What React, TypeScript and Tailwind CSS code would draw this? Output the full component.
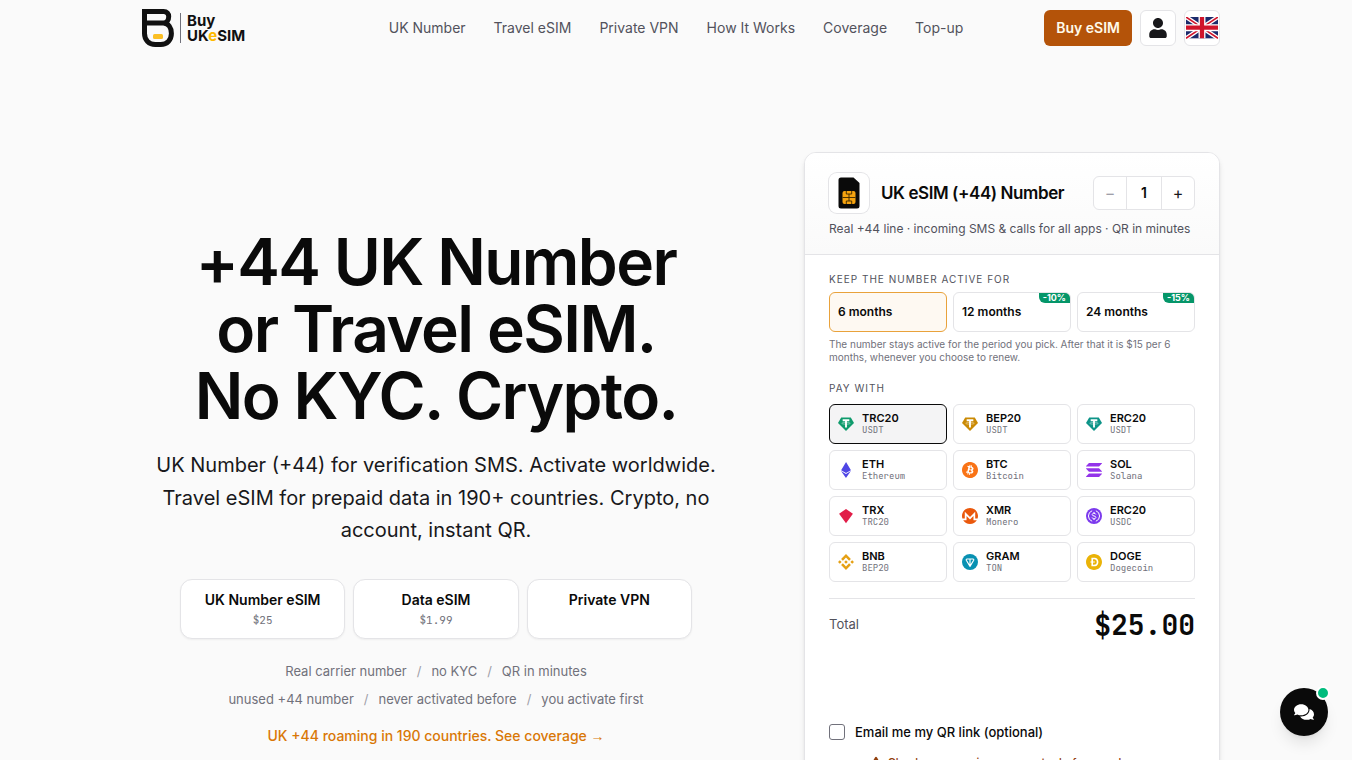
import React, { useState } from "react";
import { FaComments, FaExclamationTriangle, FaUser } from "react-icons/fa";
import {
  SiBinance,
  SiBitcoin,
  SiDogecoin,
  SiEthereum,
  SiMonero,
  SiSolana,
} from "react-icons/si";

interface Coin {
  id: string;
  name: string;
  network: string;
  color: string;
  icon: React.ComponentType<{ className?: string }>;
}

interface Period {
  months: number;
  discount?: string;
}

const TetherIcon = ({ className }: { className?: string }) => (
  <svg viewBox="0 0 24 24" fill="none" className={className} aria-hidden="true">
    <path d="M4.8 2.2h14.4L24 10.6 12 22.4 0 10.6z" fill="currentColor" />
    <path d="M7 6.4h10M12 6.4v11" stroke="#fff" strokeWidth="2.8" />
    <ellipse cx="12" cy="11" rx="6.4" ry="1.3" stroke="#fff" strokeWidth=".6" />
  </svg>
);

const TronIcon = ({ className }: { className?: string }) => (
  <svg viewBox="0 0 24 24" className={className} aria-hidden="true">
    <path d="M12 1.6 22.4 8.6 12 22.8 1.6 8.6z" fill="currentColor" />
  </svg>
);

const TonIcon = ({ className }: { className?: string }) => (
  <svg viewBox="0 0 24 24" fill="none" className={className} aria-hidden="true">
    <circle cx="12" cy="12" r="12" fill="currentColor" />
    <path d="M7.5 7.5h9c1 0 1.5 1 1 1.9L12 18.5 6.5 9.4c-.5-.9 0-1.9 1-1.9zM12 7.5v11" stroke="#fff" strokeWidth="1.7" strokeLinejoin="round" />
  </svg>
);

const UsdcIcon = ({ className }: { className?: string }) => (
  <svg viewBox="0 0 24 24" fill="none" className={className} aria-hidden="true">
    <circle cx="12" cy="12" r="12" fill="currentColor" />
    <g stroke="#fff" strokeWidth="1.5">
      <path d="M9.2 4.1a8.4 8.4 0 0 0 0 15.8M14.8 4.1a8.4 8.4 0 0 1 0 15.8" />
      <path d="M14.7 9.7c-.3-1.2-1.3-1.8-2.7-1.8-1.6 0-2.7.8-2.7 2 0 2.9 5.5 1.2 5.5 4.2 0 1.2-1.1 2-2.8 2-1.6 0-2.7-.7-2.9-2M12 6v2M12 16v2" />
    </g>
  </svg>
);

const coins: Coin[] = [
  { id: "usdt-trc20", name: "TRC20", network: "USDT", color: "text-[#0f9b6c]", icon: TetherIcon },
  { id: "usdt-bep20", name: "BEP20", network: "USDT", color: "text-[#ca8a04]", icon: TetherIcon },
  { id: "usdt-erc20", name: "ERC20", network: "USDT", color: "text-[#0d9488]", icon: TetherIcon },
  { id: "eth", name: "ETH", network: "Ethereum", color: "text-[#4f46e5]", icon: SiEthereum },
  { id: "btc", name: "BTC", network: "Bitcoin", color: "text-[#f97316]", icon: SiBitcoin },
  { id: "sol", name: "SOL", network: "Solana", color: "text-[#9333ea]", icon: SiSolana },
  { id: "trx", name: "TRX", network: "TRC20", color: "text-[#e11d48]", icon: TronIcon },
  { id: "xmr", name: "XMR", network: "Monero", color: "text-[#ea580c]", icon: SiMonero },
  { id: "usdc", name: "ERC20", network: "USDC", color: "text-[#7c3aed]", icon: UsdcIcon },
  { id: "bnb", name: "BNB", network: "BEP20", color: "text-[#e5a013]", icon: SiBinance },
  { id: "gram", name: "GRAM", network: "TON", color: "text-[#0891b2]", icon: TonIcon },
  { id: "doge", name: "DOGE", network: "Dogecoin", color: "text-[#eab308]", icon: SiDogecoin },
];

const periods: Period[] = [
  { months: 6 },
  { months: 12, discount: "-10%" },
  { months: 24, discount: "-15%" },
];

const navLinks = ["UK Number", "Travel eSIM", "Private VPN", "How It Works", "Coverage", "Top-up"];

const products = [
  { title: "UK Number eSIM", price: "$25" },
  { title: "Data eSIM", price: "$1.99" },
  { title: "Private VPN", price: "" },
];

const facts = [
  ["Real carrier number", "no KYC", "QR in minutes"],
  ["unused +44 number", "never activated before", "you activate first"],
];

const mono = "font-['JetBrains_Mono','Liberation_Mono',monospace]";

const Logo = () => (
  <a href="#" className="flex items-center gap-1.5 justify-self-start pl-2.5">
    <svg width="32" height="38" viewBox="0 0 32 38" fill="none" aria-hidden="true">
      <path
        d="M2.5 18V2.5H21.5C25 2.5 26.7 4.7 26.7 7.5C26.7 10.5 25 14 21.5 14H2.5V24.5C2.5 31 7 35.4 13.2 35.4H18.8C25 35.4 29.4 31 29.4 24.5C29.4 18.5 26.5 14.5 21.5 14"
        stroke="#111"
        strokeWidth="5"
      />
      <rect x="11" y="25" width="10" height="5" rx="1.5" fill="#fbbf24" />
    </svg>
    <span className="h-[30px] w-px bg-zinc-500" />
    <span className="flex flex-col text-[15px] leading-[15px] font-bold text-[#111]">
      <span>Buy</span>
      <span>
        UK<span className="text-amber-400">e</span>SIM
      </span>
    </span>
  </a>
);

const UkFlag = () => (
  <svg viewBox="0 0 60 40" className="w-8" aria-hidden="true">
    <rect width="60" height="40" fill="#1b2a6b" />
    <path d="M0 0l60 40M60 0L0 40" stroke="#fff" strokeWidth="8" />
    <path d="M0 0l30 20M60 40L30 20" stroke="#cf142b" strokeWidth="3" />
    <path d="M60 0L30 20M0 40l30-20" stroke="#cf142b" strokeWidth="3" />
    <path d="M30 0v40M0 20h60" stroke="#fff" strokeWidth="13" />
    <path d="M30 0v40M0 20h60" stroke="#cf142b" strokeWidth="8" />
  </svg>
);

const SimIcon = () => (
  <svg width="22" height="32" viewBox="0 0 22 32" fill="none" aria-hidden="true">
    <path d="M3 .5h12.5L21.5 6v23a2.5 2.5 0 0 1-2.5 2.5H3A2.5 2.5 0 0 1 .5 29V3A2.5 2.5 0 0 1 3 .5z" fill="#0a0a0a" />
    <rect x="4.5" y="14" width="13" height="13" rx="2" fill="#f5a30f" />
    <path d="M4.5 20.5h13M11 17v7M8.3 14v3h5.4v-3M8.3 27v-3h5.4v3" stroke="#3b2700" strokeWidth=".9" />
  </svg>
);

const Header = () => (
  <header className="mx-auto grid h-14 w-full max-w-6xl grid-cols-[1fr_auto_1fr] items-center px-8">
    <Logo />
    <nav className="flex items-center gap-7">
      {navLinks.map((link) => (
        <a key={link} href="#" className="text-sm text-zinc-600">
          {link}
        </a>
      ))}
    </nav>
    <div className="flex items-center gap-2 justify-self-end">
      <a
        href="#"
        className="flex h-9 items-center rounded-md bg-[#b45309] px-3 text-sm font-semibold text-amber-50"
      >
        Buy eSIM
      </a>
      <button
        type="button"
        aria-label="Account"
        className="flex size-9 items-center justify-center rounded-md border border-zinc-200 bg-white text-zinc-900"
      >
        <FaUser className="size-5" />
      </button>
      <button
        type="button"
        aria-label="Language"
        className="flex size-9 items-center justify-center rounded-md border border-zinc-200 bg-white"
      >
        <UkFlag />
      </button>
    </div>
  </header>
);

const Hero = () => (
  <section className="flex flex-col items-center pt-[76px] text-center">
    <h1 className="text-[64px] leading-[67px] font-semibold tracking-tight text-[#0a0a0a]">
      +44 UK Number
      <br />
      or Travel eSIM.
      <br />
      No KYC. Crypto.
    </h1>
    <p className="mt-5 max-w-xl text-xl leading-relaxed text-zinc-900">
      UK Number (+44) for verification SMS. Activate worldwide. Travel eSIM for
      prepaid data in 190+ countries. Crypto, no account, instant QR.
    </p>
    <div className="mt-8 grid w-full max-w-lg grid-cols-3 gap-2">
      {products.map((product) => (
        <a
          key={product.title}
          href="#"
          className="flex h-[60px] flex-col items-center rounded-xl border border-zinc-200 bg-white pt-2.5 shadow-xs"
        >
          <span className="text-sm font-semibold text-[#0a0a0a]">{product.title}</span>
          <span className={`${mono} mt-0.5 text-[11px] leading-4 text-zinc-500`}>
            {product.price}
          </span>
        </a>
      ))}
    </div>
    <div className="mt-[22px] flex flex-col gap-2 text-[13px] leading-5 text-zinc-500">
      {facts.map((row, index) => (
        <p key={index} className="flex justify-center gap-2.5">
          {row.map((fact, i) => (
            <React.Fragment key={fact}>
              {i > 0 && <span className="text-zinc-400">/</span>}
              <span>{fact}</span>
            </React.Fragment>
          ))}
        </p>
      ))}
    </div>
    <a href="#" className="mt-4 text-sm leading-[22px] font-medium text-[#d97706]">
      UK +44 roaming in 190 countries. See coverage{" "}
      <span className="font-['Liberation_Sans',sans-serif]">→</span>
    </a>
  </section>
);

const OrderCard = () => {
  const [quantity, setQuantity] = useState(1);
  const [months, setMonths] = useState(6);
  const [coin, setCoin] = useState("usdt-trc20");

  return (
    <section className="overflow-hidden rounded-xl border border-zinc-200 bg-white shadow-md">
      <div className="border-b border-zinc-200 bg-linear-to-b from-white to-zinc-50 px-6 pt-5 pb-[15px]">
        <div className="flex items-center gap-3">
          <span className="flex size-10 items-center justify-center rounded-lg bg-white ring-1 ring-zinc-200">
            <SimIcon />
          </span>
          <h2 className="flex-1 text-[17px] leading-6 font-semibold tracking-tight text-[#0a0a0a]">
            UK eSIM (+44) Number
          </h2>
          <div className="flex h-[34px] items-stretch divide-x divide-zinc-200 rounded-md border border-zinc-200 bg-white">
            <button
              type="button"
              aria-label="Decrease quantity"
              disabled={quantity === 1}
              onClick={() => setQuantity(quantity - 1)}
              className="w-[33px] text-base text-zinc-900 disabled:text-zinc-400"
            >
              −
            </button>
            <span className="flex w-[35px] items-center justify-center text-sm font-semibold text-[#0a0a0a]">
              {quantity}
            </span>
            <button
              type="button"
              aria-label="Increase quantity"
              onClick={() => setQuantity(quantity + 1)}
              className="w-8 text-base text-zinc-900"
            >
              +
            </button>
          </div>
        </div>
        <p className="mt-1.5 text-xs leading-5 text-zinc-600">
          Real +44 line · incoming SMS &amp; calls for all apps · QR in minutes
        </p>
      </div>

      <div className="px-6 pt-4">
        <h3 className="text-[10px] leading-4 tracking-widest text-zinc-600 uppercase">
          Keep the number active for
        </h3>
        <div className="mt-[5px] grid grid-cols-3 gap-1.5">
          {periods.map((period) => (
            <button
              key={period.months}
              type="button"
              aria-pressed={months === period.months}
              onClick={() => setMonths(period.months)}
              className={`relative h-10 overflow-hidden rounded-md border px-2 text-left text-xs font-semibold text-[#0a0a0a] ${
                months === period.months ? "border-[#e9a23b] bg-[#fef9f2]" : "border-zinc-200 bg-white"
              }`}
            >
              {period.months} months
              {period.discount && (
                <span className="absolute top-0 right-0 rounded-bl-md bg-[#059669] px-1 text-[9px] leading-[10px] font-bold text-white">
                  {period.discount}
                </span>
              )}
            </button>
          ))}
        </div>
        <p className="mt-1.5 text-[10px] leading-[13px] text-zinc-500">
          The number stays active for the period you pick. After that it is $15
          per 6 months, whenever you choose to renew.
        </p>

        <h3 className="mt-4 text-[10px] leading-4 tracking-widest text-zinc-600 uppercase">
          Pay with
        </h3>
        <div className="mt-2 grid grid-cols-3 gap-1.5">
          {coins.map((item) => {
            const Icon = item.icon;

            return (
              <button
                key={item.id}
                type="button"
                aria-pressed={coin === item.id}
                onClick={() => setCoin(item.id)}
                className={`flex h-10 items-center gap-2 rounded-md border px-2 text-left ${
                  coin === item.id ? "border-[#0a0a0a] bg-zinc-100" : "border-zinc-200 bg-white"
                }`}
              >
                <span className={item.color}>
                  <Icon className="size-4" />
                </span>
                <span className="flex flex-col">
                  <span className="text-[11px] leading-[13px] font-semibold text-[#0a0a0a]">
                    {item.name}
                  </span>
                  <span className={`${mono} text-[9px] leading-[11px] text-zinc-500`}>
                    {item.network}
                  </span>
                </span>
              </button>
            );
          })}
        </div>

        <div className="mt-4 flex items-center justify-between border-t border-zinc-200 pt-1.5">
          <span className="text-[13px] text-zinc-600">Total</span>
          <span className={`${mono} text-[28px] leading-10 font-bold text-[#0a0a0a]`}>
            ${(25 * quantity).toFixed(2)}
          </span>
        </div>

        <label className="mt-[77px] flex items-center gap-2.5 text-[13px] leading-5 font-medium text-[#0a0a0a]">
          <input
            type="checkbox"
            className="size-4 appearance-none rounded-[3px] border border-zinc-500 bg-white checked:bg-zinc-900"
          />
          Email me my QR link (optional)
        </label>
        <p className="mt-3 flex items-center justify-center gap-1.5 pr-4 pb-6 text-[11px] leading-4 font-medium text-[#92400e]">
          <FaExclamationTriangle className="size-3" />
          Check coverage in your country before you buy
        </p>
      </div>
    </section>
  );
};

const App: React.FC = () => {
  return (
    <div className="min-h-screen bg-[#fafafa] font-['Inter',sans-serif]">
      <Header />
      <main className="mx-auto grid w-full max-w-6xl grid-cols-[minmax(0,1fr)_416px] items-start gap-16 px-8 pt-24">
        <Hero />
        <OrderCard />
      </main>
      <button
        type="button"
        aria-label="Open chat"
        className="fixed right-6 bottom-6 flex size-12 items-center justify-center rounded-full bg-[#0a0a0a] text-white shadow-lg"
      >
        <FaComments className="size-5" />
        <span className="absolute -top-0.5 -right-0.5 size-3.5 rounded-full border-2 border-white bg-emerald-500" />
      </button>
    </div>
  );
};

export default App;
